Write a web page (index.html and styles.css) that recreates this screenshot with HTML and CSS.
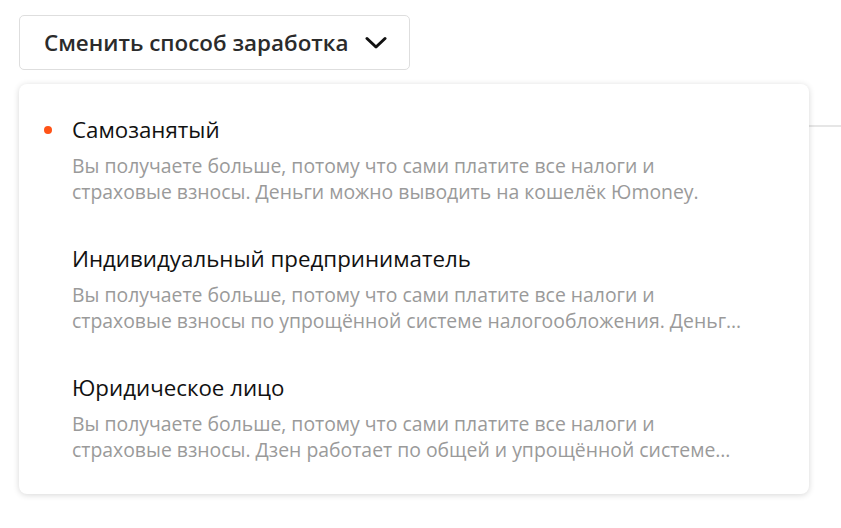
FILE: index.html
```html
<!DOCTYPE html>
<html lang="ru">
<head>
<meta charset="utf-8">
<link rel="stylesheet" href="styles.css">
</head>
<body>
<div class="page">
  <button class="switch">
    <span class="switch-label">Сменить способ заработка</span>
    <svg class="chevron" width="22" height="14" viewBox="0 0 22 14"><path d="M2 2.5 L11 11 L20 2.5" fill="none" stroke="#111" stroke-width="3" stroke-linecap="round" stroke-linejoin="round"/></svg>
  </button>
  <div class="divider"></div>
  <div class="menu">
    <div class="item active">
      <div class="item-title">Самозанятый</div>
      <div class="item-desc">Вы получаете больше, потому что сами платите все налоги и<br>страховые взносы. Деньги можно выводить на кошелёк Юmoney.</div>
    </div>
    <div class="item">
      <div class="item-title">Индивидуальный предприниматель</div>
      <div class="item-desc">Вы получаете больше, потому что сами платите все налоги и<br>страховые взносы по упрощённой системе налогообложения. Деньги выводятся на расчётный счёт.</div>
    </div>
    <div class="item">
      <div class="item-title">Юридическое лицо</div>
      <div class="item-desc">Вы получаете больше, потому что сами платите все налоги и<br>страховые взносы. Дзен работает по общей и упрощённой системе налогообложения.</div>
    </div>
  </div>
</div>
</body>
</html>
```
FILE: styles.css
```css
* { box-sizing: border-box; }
html, body { margin: 0; background: #fff; }
body { font-family: "Open Sans", "Noto Sans", sans-serif; }
.page { position: relative; width: 841px; height: 528px; padding: 15px 0 0 19px; overflow: hidden; }
.switch {
  display: flex; align-items: center; gap: 17px;
  width: 391px; height: 55px; padding: 0 0 0 24px;
  background: #fff; border: 1px solid #dedede; border-radius: 5px;
  font-family: inherit; cursor: pointer;
}
.switch-label { font-size: 22.4px; font-weight: 600; color: #2b2b2b; line-height: 28px; }
.chevron { display: block; }
.divider { margin: 55px 0 0 0; height: 2px; background: #e6e6e6; }
.menu {
  position: absolute; left: 19px; top: 84px; width: 790px; height: 410px;
  background: #fff; border-radius: 8px;
  box-shadow: 0 1px 6px rgba(0,0,0,0.16);
  padding: 32px 40px 0 53px;
  display: flex; flex-direction: column; gap: 40px;
}
.item { position: relative; }
.item.active::before {
  content: ""; position: absolute; left: -28px; top: 10px;
  width: 8px; height: 8px; border-radius: 50%; background: #ff5317;
}
.item-title { font-size: 22.3px; line-height: 28px; color: #111; }
.item-desc {
  margin-top: 9px; font-size: 19.4px; line-height: 26px; color: #9a9a9a;
  width: 672px;
  display: -webkit-box; -webkit-box-orient: vertical; -webkit-line-clamp: 2; overflow: hidden;
}
```
